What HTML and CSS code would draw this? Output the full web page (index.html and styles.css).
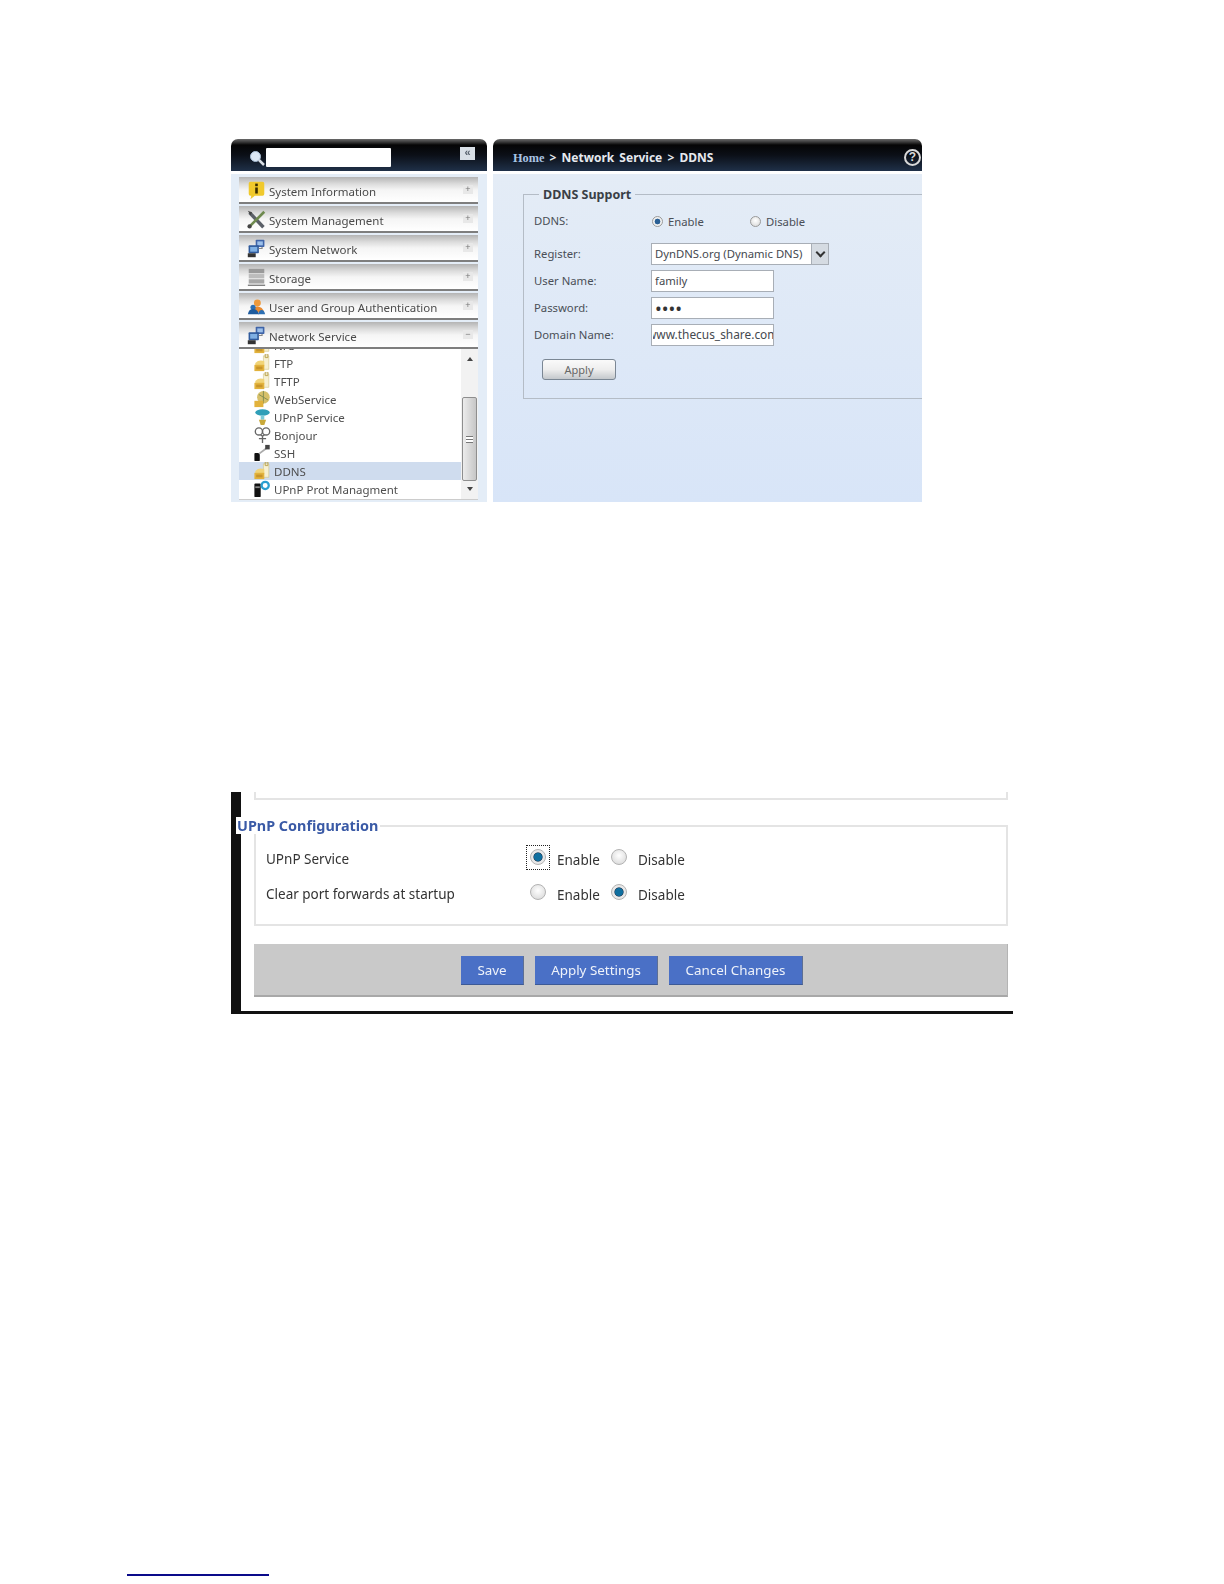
FILE: index.html
```html
<!DOCTYPE html>
<html lang="en">
<head>
<meta charset="utf-8">
<title>DDNS and UPnP configuration</title>
<link rel="stylesheet" href="styles.css">
</head>
<body>
<svg class="defs" width="0" height="0" aria-hidden="true">
  <symbol id="i-net" viewBox="0 0 24 24">
    <rect x="11" y="1" width="11" height="9" rx="1" fill="#3f64a8"/><rect x="13" y="3" width="7" height="5" fill="#9cc0ea"/>
    <rect x="2" y="8" width="13" height="10" rx="1" fill="#2f5a9c"/><rect x="4" y="10" width="9" height="6" fill="#7fb0e4"/>
    <rect x="1" y="18" width="10" height="5" fill="#333"/><path d="M15 12h4v-2" fill="none" stroke="#888" stroke-width="1.5"/>
  </symbol>
  <symbol id="i-lock" viewBox="0 0 20 20">
    <path d="M11 2h6v15h-6z" fill="#f6f0d2" stroke="#cbbd7a" stroke-width=".6"/>
    <path d="M13 0h3v4h-3z" fill="none" stroke="#b9a04a"/>
    <path d="M2 10q4-4 10-2v5H2z" fill="#f1d477"/>
    <path d="M1 12h11v7H1z" fill="#e2b23c"/><path d="M3 14h7v3H3z" fill="#c8952a"/>
  </symbol>
  <symbol id="i-term" viewBox="0 0 20 20">
    <rect x="1" y="10" width="6" height="9" rx="1" fill="#111"/><path d="M6 11l8-6" stroke="#aaa" stroke-width="2"/><rect x="13" y="1" width="5" height="5" fill="#444"/>
  </symbol>
</svg>

<section class="shot-one">
  <aside class="side">
    <header class="bar bar-side">
      <svg class="glass" viewBox="0 0 16 16"><circle cx="6.5" cy="6.5" r="5" fill="#dce8f5" stroke="#a9bfd6"/><path d="M10 10l5 5" stroke="#d8dde4" stroke-width="2.5"/></svg>
      <div class="search"></div>
      <span class="collapse">«</span>
    </header>
    <div class="side-body">
      <div class="item">
        <svg class="item-ico" viewBox="0 0 22 22"><path d="M2 3q0-2 2-2h14q2 0 2 2v12q0 2-2 2H9l-5 4 1-4H4q-2 0-2-2z" fill="#f0c92c"/><rect x="9.500" y="3" width="3" height="3" fill="#3a2d00"/><rect x="9.500" y="7.500" width="3" height="7" fill="#3a2d00"/></svg>
        <span>System Information</span><b class="sign">+</b>
      </div>
      <div class="item">
        <svg class="item-ico" viewBox="0 0 22 22"><path d="M3 3l16 17" stroke="#5b6068" stroke-width="4"/><path d="M20 2L4 18" stroke="#6e8a4e" stroke-width="3"/><path d="M1 1l5 2-2 3z" fill="#444"/><circle cx="3" cy="19" r="2.500" fill="#444"/></svg>
        <span>System Management</span><b class="sign">+</b>
      </div>
      <div class="item"><svg class="item-ico"><use href="#i-net"/></svg><span>System Network</span><b class="sign">+</b></div>
      <div class="item">
        <svg class="item-ico" viewBox="0 0 22 22"><rect x="2" y="1" width="18" height="5" fill="#9a9a9a"/><rect x="2" y="7" width="18" height="5" fill="#bcbcbc"/><rect x="2" y="13" width="18" height="5" fill="#a8a8a8"/><path d="M1 20h20" stroke="#777" stroke-width="1.500"/></svg>
        <span>Storage</span><b class="sign">+</b>
      </div>
      <div class="item">
        <svg class="item-ico" viewBox="0 0 22 22"><circle cx="12" cy="7" r="4" fill="#ee9a3c"/><path d="M5 18q1-7 7-7t8 7z" fill="#e88a30"/><circle cx="7" cy="12" r="3" fill="#2c6fb4"/><path d="M1 20q1-6 6-6t7 6z" fill="#1f5c9e"/><path d="M13 20q1-5 4-5t4 5z" fill="#2c6fb4"/></svg>
        <span>User and Group Authentication</span><b class="sign">+</b>
      </div>
      <div class="item"><svg class="item-ico"><use href="#i-net"/></svg><span>Network Service</span><b class="sign">−</b></div>
      <div class="tree">
        <ul class="rows">
          <li class="row"><svg class="tree-ico"><use href="#i-lock"/></svg><span>NFS</span></li>
          <li class="row"><svg class="tree-ico"><use href="#i-lock"/></svg><span>FTP</span></li>
          <li class="row"><svg class="tree-ico"><use href="#i-lock"/></svg><span>TFTP</span></li>
          <li class="row"><svg class="tree-ico" viewBox="0 0 20 20"><circle cx="11" cy="8" r="7" fill="#d6c06a"/><path d="M6 5l10 6M11 1v14" stroke="#7d8a50"/><path d="M1 12h10v7H1z" fill="#e2b23c"/></svg><span>WebService</span></li>
          <li class="row"><svg class="tree-ico" viewBox="0 0 20 20"><ellipse cx="10" cy="5" rx="8" ry="3.500" fill="#2f9fb8"/><path d="M8 8h4v5H8z" fill="#7ccbd8"/><path d="M6 13h8l-2 6H8z" fill="#c9a93a"/></svg><span>UPnP Service</span></li>
          <li class="row"><svg class="tree-ico" viewBox="0 0 20 20"><g fill="none" stroke="#666" stroke-width="1.500"><circle cx="6" cy="6" r="4"/><circle cx="14" cy="6" r="4"/><path d="M8 10q2 2 4 0M10 11v8M6 14h8"/></g></svg><span>Bonjour</span></li>
          <li class="row"><svg class="tree-ico"><use href="#i-term"/></svg><span>SSH</span></li>
          <li class="row row-on"><svg class="tree-ico"><use href="#i-lock"/></svg><span>DDNS</span></li>
          <li class="row"><svg class="tree-ico" viewBox="0 0 20 20"><rect x="1" y="4" width="7" height="15" rx="1" fill="#111"/><rect x="2" y="7" width="5" height="2" fill="#888"/><circle cx="13" cy="6" r="4" fill="none" stroke="#2a9fd0" stroke-width="2.500"/></svg><span>UPnP Prot Managment</span></li>
        </ul>
        <div class="scroll">
          <span class="arrow arrow-up"></span>
          <div class="thumb"><i></i></div>
          <span class="arrow arrow-down"></span>
        </div>
      </div>
    </div>
  </aside>

  <main class="panel">
    <header class="bar bar-main">
      <p class="crumb"><span class="home">Home</span> &gt; Network Service &gt; DDNS</p>
      <span class="help">?</span>
    </header>
    <div class="panel-body">
      <fieldset class="ddns">
        <legend>DDNS Support</legend>
        <div class="form-row form-first">
          <label>DDNS:</label>
          <div class="choice">
            <input class="rd rd-small" type="radio" name="ddns" checked><span class="opt-a">Enable</span>
            <input class="rd rd-small" type="radio" name="ddns"><span>Disable</span>
          </div>
        </div>
        <div class="form-row">
          <label>Register:</label>
          <div class="select"><span>DynDNS.org (Dynamic DNS)</span><b class="select-btn"></b></div>
        </div>
        <div class="form-row"><label>User Name:</label><input class="field" type="text" value="family"></div>
        <div class="form-row"><label>Password:</label><input class="field field-pass" type="password" value="abcd"></div>
        <div class="form-row"><label>Domain Name:</label><input class="field field-scrolled" type="text" value="www.thecus_share.com"></div>
        <button class="apply" type="button">Apply</button>
      </fieldset>
    </div>
  </main>
</section>

<section class="shot-two">
  <div class="prev-box"></div>
  <fieldset class="upnp">
    <legend>UPnP Configuration</legend>
    <div class="up-row">
      <span class="up-label">UPnP Service</span>
      <span class="focus"><input class="rd rd-big" type="radio" name="svc" checked></span><span class="up-opt">Enable</span>
      <input class="rd rd-big" type="radio" name="svc"><span class="up-opt up-last">Disable</span>
    </div>
    <div class="up-row">
      <span class="up-label">Clear port forwards at startup</span>
      <span class="focus focus-off"><input class="rd rd-big" type="radio" name="clr"></span><span class="up-opt">Enable</span>
      <input class="rd rd-big" type="radio" name="clr" checked><span class="up-opt up-last">Disable</span>
    </div>
  </fieldset>
  <div class="actions">
    <button class="blue btn-save" type="button">Save</button>
    <button class="blue btn-apply" type="button">Apply Settings</button>
    <button class="blue btn-cancel" type="button">Cancel Changes</button>
  </div>
</section>

<div class="footnote-rule"></div>
</body>
</html>
```

FILE: styles.css
```css
* { box-sizing: border-box; }
html, body { margin: 0; background: #fff; }
body {
  position: relative;
  height: 1584px;
  overflow: hidden;
  padding: 139px 0 0 231px;
  font-family: "Noto Sans", "DejaVu Sans", sans-serif;
  color: #3c3c3c;
}
.defs { position: absolute; }

/* first screenshot */
.shot-one {
  display: flex;
  gap: 6px;
  width: 691px;
  height: 363px;
  filter: blur(0.35px);
}
.side { width: 256px; display: flex; flex-direction: column; }
.panel { width: 429px; display: flex; flex-direction: column; }

.bar {
  height: 32px;
  flex: none;
  display: flex;
  align-items: center;
  border-radius: 7px 7px 0 0;
  background: linear-gradient(#6a6a6a 0, #3a3a3a 3px, #050505 6px, #0b0f17 16px, #1f3048 100%);
}
.bar-side { padding: 5px 12px 0 18px; }
.glass { width: 16px; height: 16px; }
.search { width: 125px; height: 19px; margin-left: 1px; background: #fff; border-radius: 1px; }
.collapse {
  width: 15px;
  height: 13px;
  margin: -9px 0 0 auto;
  background: #d8dfe6;
  color: #56606c;
  font: 700 11px/11px "Liberation Sans", sans-serif;
  text-align: center;
}
.side-body {
  flex: 1;
  margin-top: 3px;
  padding: 3px 9px 2px 8px;
  background: #e4edf7;
  display: flex;
  flex-direction: column;
  gap: 2px;
}
.item {
  height: 27px;
  flex: none;
  display: flex;
  align-items: center;
  padding: 3px 5px 0 8px;
  border-bottom: 2px solid #7e7e7e;
  background: linear-gradient(#b4b4b4 0, #dcdcdc 7px, #f5f5f5 13px, #fff 100%);
  font-size: 11.5px;
  color: #4a4a4a;
}
.item-ico { width: 19px; height: 19px; flex: none; margin: -1px 3px 0 0; }
.item span { flex: 1; }
.sign {
  width: 10px;
  height: 9px;
  margin-top: -3px;
  background: #e8e8e8;
  color: #777;
  font: 400 9px/9px "Liberation Sans", sans-serif;
  text-align: center;
}
.tree {
  height: 151px;
  flex: none;
  margin-top: -2px;
  display: flex;
  background: #fff;
  border-bottom: 1px solid #ccc;
  overflow: hidden;
}
.rows {
  list-style: none;
  margin: -13px 0 0;
  padding: 0;
  width: 222px;
}
.row {
  height: 18px;
  display: flex;
  align-items: center;
  padding-left: 14px;
  font-size: 11.5px;
  color: #4e4e4e;
}
.row span { margin-left: 2px; }
.row-on { background: #cfdcee; }
.tree-ico { width: 19px; height: 18px; flex: none; }
.scroll {
  width: 17px;
  flex: none;
  background: #f2f2f2;
  display: flex;
  flex-direction: column;
  align-items: center;
}
.arrow { width: 0; height: 0; border: 3px solid transparent; flex: none; }
.arrow-up { border-bottom: 4px solid #444; border-top: 0; margin-top: 8px; }
.arrow-down { border-top: 4px solid #444; border-bottom: 0; margin-top: 6px; }
.thumb {
  width: 15px;
  height: 84px;
  flex: none;
  margin-top: 36px;
  border: 1px solid #8e8e8e;
  border-radius: 2px;
  background: linear-gradient(90deg, #ececec, #c6c6c6);
  display: flex;
  align-items: center;
  justify-content: center;
}
.thumb i { width: 7px; height: 7px; border-top: 1px solid #777; border-bottom: 1px solid #777; background: linear-gradient(#fff 2px, #777 2px, #777 3px, #fff 3px); }

/* main panel */
.bar-main { padding: 4px 1px 0 20px; }
.crumb {
  margin: 0;
  font-size: 12px;
  font-weight: 700;
  word-spacing: 2px;
  color: #e6e9ee;
}
.home { font-family: "Liberation Serif", serif; font-size: 12.3px; color: #a9c4e4; }
.help {
  width: 17px;
  height: 17px;
  margin-left: auto;
  border: 2px solid #d8d8d8;
  border-radius: 50%;
  color: #d8d8d8;
  font: 700 12px/13px "Liberation Sans", sans-serif;
  text-align: center;
}
.panel-body {
  flex: 1;
  margin-top: 3px;
  padding: 11px 0 0 30px;
  background: linear-gradient(#e4ecf6, #d8e5f8);
}
.ddns {
  margin: 0;
  height: 214px;
  padding: 6px 0 0 10px;
  border: 1px solid #b4bcc6;
  border-right: 0;
  min-width: 0;
}
.ddns legend {
  margin-left: 5px;
  padding: 0 4px;
  font-size: 12.5px;
  font-weight: 700;
  line-height: 19px;
  color: #3a3f46;
}
.form-row {
  display: flex;
  align-items: center;
  height: 22px;
  margin-bottom: 5px;
  font-size: 11.3px;
  color: #4a4f56;
}
.form-first { margin-bottom: 11px; }
.form-row label { width: 117px; flex: none; margin-top: -2px; }
.choice { display: flex; align-items: center; }
.choice span { margin-left: 5px; }
.choice .opt-a { width: 82px; }
.rd {
  appearance: none;
  margin: 0;
  flex: none;
  border-radius: 50%;
  border: 1px solid #9a9a9a;
  background: radial-gradient(circle at 50% 40%, #fff, #d4d4d4);
}
.rd-small { width: 11px; height: 11px; }
.choice .rd:first-child { margin-left: 1px; }
.rd-small:checked { background: radial-gradient(circle, #2a5f95 0 2.6px, #f1f1f1 3.2px); }
.rd-big { width: 16px; height: 16px; border-color: #b2b2b2; }
.rd-big:checked { background: radial-gradient(circle, #0f6f9f 0 3.6px, #1c3f5e 4.2px, #e8e8e8 5px); }
.select {
  width: 178px;
  height: 22px;
  display: flex;
  background: #fff;
  border: 1px solid #a8aeb6;
}
.select span { width: 159px; padding-left: 3px; line-height: 19px; white-space: nowrap; overflow: hidden; color: #45494f; }
.select-btn {
  flex: 1;
  border-left: 1px solid #a8aeb6;
  background: #d5dbe2;
  position: relative;
}
.select-btn::after {
  content: "";
  position: absolute;
  left: 5px;
  top: 5px;
  width: 5px;
  height: 5px;
  border: solid #333;
  border-width: 0 2px 2px 0;
  transform: rotate(45deg);
}
.field {
  width: 123px;
  height: 22px;
  padding: 0 0 2px 3px;
  border: 1px solid #a8aeb6;
  background: #fff;
  font: 11.3px "Noto Sans", sans-serif;
  color: #45494f;
  outline: 0;
}
.field-pass { font-size: 18px; letter-spacing: 0; padding-bottom: 0; color: #333; }
.field-scrolled { font-size: 11.9px; text-indent: -6px; padding-left: 1px; }
.apply {
  display: block;
  width: 74px;
  height: 21px;
  margin: 13px 0 0 8px;
  padding: 0;
  border: 1px solid #7b8794;
  border-radius: 3px;
  background: linear-gradient(#fafafa, #eee 50%, #c4c8cc);
  font: 11px "Noto Sans", sans-serif;
  color: #666;
}

/* second screenshot */
.shot-two {
  width: 782px;
  height: 222px;
  margin-top: 290px;
  padding: 0 5px 0 13px;
  border-left: 10px solid #111;
  border-bottom: 3px solid #111;
  filter: blur(0.3px);
}
.prev-box {
  height: 8px;
  border: 2px solid #e4e4e4;
  border-top: 0;
}
.upnp {
  margin: 17px 0 0;
  height: 109px;
  padding: 0 0 0 10px;
  border: 2px solid #e4e4e4;
  min-width: 0;
}
.upnp legend {
  margin-left: -30px;
  padding: 0 2px 0 1px;
  background: #fff;
  font-size: 14.4px;
  font-weight: 700;
  line-height: 17px;
  color: #3a5aa6;
}
.up-row {
  display: flex;
  align-items: center;
  height: 35px;
  font-size: 13.5px;
  color: #333;
}
.up-row:first-of-type { margin-top: 7px; }
.up-label { width: 260px; flex: none; }
.focus {
  width: 24px;
  height: 25px;
  margin-top: -3px;
  display: flex;
  align-items: center;
  justify-content: center;
  border: 1px dotted #222;
}
.focus-off { border-color: transparent; }
.up-opt { width: 51px; margin-left: 7px; padding-top: 2px; }
.up-last { margin-left: 11px; }
.up-opt + .rd { margin-top: -3px; margin-left: 3px; }
.actions {
  height: 53px;
  margin-top: 18px;
  padding: 12px 0 0 207px;
  display: flex;
  gap: 11px;
  background: #c9c9c9;
  border-bottom: 2px solid #a8a8a8;
  border-right: 1px solid #b4b4b4;
}
.blue {
  height: 29px;
  padding: 0;
  border: 0;
  border-bottom: 1px solid #3d5a96;
  border-right: 1px solid #5d6f94;
  background: #4a70c6;
  color: #eef2fa;
  font: 13.4px "Noto Sans", sans-serif;
}
.btn-save { width: 63px; }
.btn-apply { width: 123px; }
.btn-cancel { width: 134px; }

.footnote-rule {
  position: absolute;
  left: 127px;
  top: 1574px;
  width: 142px;
  height: 2px;
  background: #0a0a8a;
}
```
